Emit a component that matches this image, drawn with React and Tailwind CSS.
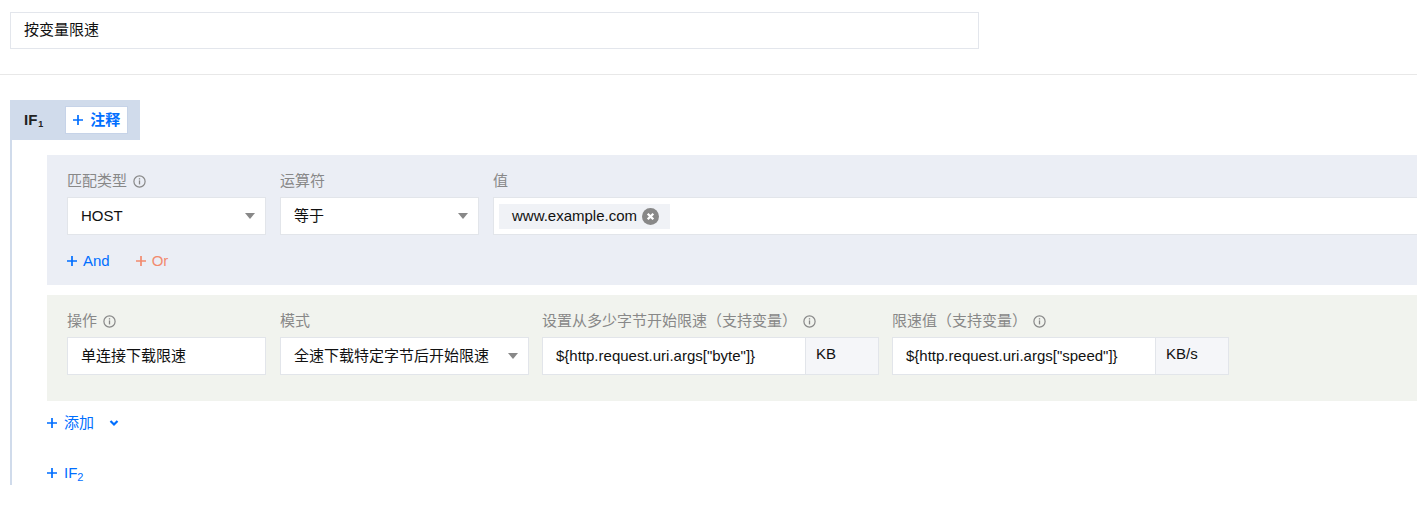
import React from "react";

const Info = () => (
  <svg width="13" height="13" viewBox="0 0 13 13" className="inline-block">
    <circle cx="6.5" cy="6.5" r="5.6" fill="none" stroke="#888" strokeWidth="1.2" />
    <rect x="5.85" y="5.4" width="1.3" height="4" fill="#888" />
    <rect x="5.85" y="3.2" width="1.3" height="1.3" fill="#888" />
  </svg>
);

const Caret = () => (
  <svg width="10" height="6" viewBox="0 0 10 6">
    <path d="M0 0 L10 0 L5 6 Z" fill="#888" />
  </svg>
);

const Plus = ({ color = "#006eff" }) => (
  <svg width="10" height="10" viewBox="0 0 10 10" className="inline-block">
    <path d="M5 0 V10 M0 5 H10" stroke={color} strokeWidth="1.7" />
  </svg>
);

const Label = ({ children, info }) => (
  <div className="h-[22px] mb-[5px] flex items-center text-[#888] text-[15px] whitespace-nowrap">
    {children}
    {info && <span className="ml-[6px] flex items-center"><Info /></span>}
  </div>
);

const Box = ({ children, w, caret, className = "" }) => (
  <div
    className={`h-[38px] bg-white border border-[#e2e5ea] flex items-center justify-between pl-[13px] pr-[10px] text-[15px] text-[#111] whitespace-nowrap ${className}`}
    style={w ? { width: w } : undefined}
  >
    <span>{children}</span>
    {caret && <Caret />}
  </div>
);

export default function App() {
  return (
    <div
      className="w-[1417px] h-[513px] bg-white overflow-hidden text-[15px] text-[#111]"
      style={{ fontFamily: '"Liberation Sans", Arial, "Noto Sans CJK SC", sans-serif' }}
    >
      <div className="pl-[10px] pt-[12px]">
        <div className="w-[969px] h-[37px] border border-[#e3e6ec] flex items-center pl-[13px]">
          按变量限速
        </div>
      </div>
      <div className="mt-[25px] border-t border-[#e8e8e8]" />
      <div className="mt-[25px] ml-[10px]">
        <div className="w-[130px] h-[40px] bg-[#d0dbeb] flex items-center pl-[14px]">
          <span className="font-bold text-[#222] text-[15px]">
            IF<sub className="text-[9px] align-baseline relative top-[2px] ml-[1px]">1</sub>
          </span>
          <div className="ml-[22px] h-[28px] w-[63px] bg-white border border-[#c6d3e8] flex items-center justify-center gap-[7px] text-[#006eff] font-bold">
            <Plus />
            <span>注释</span>
          </div>
        </div>
        <div className="border-l-2 border-[#d0dbeb] pl-[35px] pt-[15px] pb-[1px]">
          <div className="w-[1400px] bg-[#ebeef5] pl-[20px] pt-[15px] pb-[13px]">
            <div className="flex">
              <div className="w-[199px] mr-[14px]">
                <Label info>匹配类型</Label>
                <Box w={199} caret>HOST</Box>
              </div>
              <div className="w-[199px] mr-[14px]">
                <Label>运算符</Label>
                <Box w={199} caret>等于</Box>
              </div>
              <div className="flex-1">
                <Label>值</Label>
                <div className="h-[38px] bg-white border border-[#e2e5ea] border-r-0 flex items-center pl-[5px]">
                  <div className="h-[25px] bg-[#f0f2f6] flex items-center pl-[13px] pr-[11px] gap-[5px]">
                    <span>www.example.com</span>
                    <svg width="17" height="17" viewBox="0 0 17 17">
                      <circle cx="8.5" cy="8.5" r="8.5" fill="#888" />
                      <path d="M5.7 5.7 L11.3 11.3 M11.3 5.7 L5.7 11.3" stroke="#fff" strokeWidth="2.3" />
                    </svg>
                  </div>
                </div>
              </div>
            </div>
            <div className="mt-[15px] h-[22px] flex items-center">
              <span className="flex items-center gap-[6px] text-[#006eff]">
                <Plus />
                And
              </span>
              <span className="ml-[26px] flex items-center gap-[6px] text-[#f28a6e]">
                <Plus color="#f28a6e" />
                Or
              </span>
            </div>
          </div>
          <div className="mt-[10px] w-[1400px] bg-[#f1f3ee] pl-[20px] pt-[15px] pb-[26px]">
            <div className="flex">
              <div className="w-[199px] mr-[14px]">
                <Label info>操作</Label>
                <Box w={199}>单连接下载限速</Box>
              </div>
              <div className="w-[249px] mr-[13px]">
                <Label>模式</Label>
                <Box w={249} caret>全速下载特定字节后开始限速</Box>
              </div>
              <div className="mr-[13px]">
                <Label info>设置从多少字节开始限速（支持变量）</Label>
                <div className="flex">
                  <Box w={264} className="pl-[12px]">{'${http.request.uri.args["byte"]}'}</Box>
                  <div className="w-[73px] h-[38px] bg-[#f5f6f9] border border-[#e2e5ea] border-l-0 flex items-center pl-[10px] pb-[3px]">KB</div>
                </div>
              </div>
              <div>
                <Label info>限速值（支持变量）</Label>
                <div className="flex">
                  <Box w={264} className="pl-[12px]">{'${http.request.uri.args["speed"]}'}</Box>
                  <div className="w-[73px] h-[38px] bg-[#f5f6f9] border border-[#e2e5ea] border-l-0 flex items-center pl-[10px] pb-[3px]">KB/s</div>
                </div>
              </div>
            </div>
          </div>
          <div className="mt-[11px] h-[22px] flex items-center text-[#006eff]">
            <Plus />
            <span className="ml-[7px]">添加</span>
            <svg width="10" height="8" viewBox="0 0 10 8" className="ml-[15px]">
              <path d="M1.5 2 L5 5.5 L8.5 2" fill="none" stroke="#006eff" strokeWidth="2.2" />
            </svg>
          </div>
          <div className="mt-[28px] h-[22px] flex items-center text-[#006eff]">
            <Plus />
            <span className="ml-[7px]">
              IF<sub className="text-[11px] align-baseline relative top-[3px]">2</sub>
            </span>
          </div>
        </div>
      </div>
    </div>
  );
}
